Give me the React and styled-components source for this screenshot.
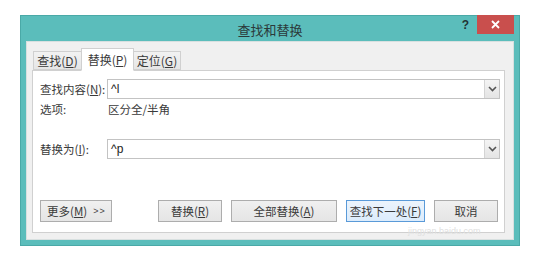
import React from "react";
import styled, { createGlobalStyle } from "styled-components";

const Global = createGlobalStyle`
  html, body { margin: 0; padding: 0; background: #ffffff; }
  body { font-family: "Noto Sans CJK SC", "Noto Sans", sans-serif; font-size: 12px; color: #3a3a3a; }
  * { box-sizing: border-box; }
`;

const Page = styled.div`
  width: 553px;
  height: 261px;
  padding: 15px 0 0 20px;
  position: relative;
`;

const Window = styled.div`
  width: 500px;
  height: 231px;
  background: #5bbdbb;
  border: 1px solid #4aa9a7;
  display: flex;
  flex-direction: column;
  padding: 0 5px 5px 5px;
`;

const TitleBar = styled.div`
  height: 26px;
  position: relative;
`;

const Title = styled.div`
  position: absolute;
  left: 0;
  right: 0;
  top: 5px;
  text-align: center;
  font-size: 13px;
  color: #2b3a3a;
  line-height: 17px;
`;

const Help = styled.div`
  position: absolute;
  right: 45px;
  top: 2px;
  font-family: "Liberation Sans", Arial, sans-serif;
  font-weight: bold;
  font-size: 12px;
  color: #233;
`;

const Close = styled.div`
  position: absolute;
  right: 0;
  top: -1px;
  width: 37px;
  height: 19px;
  background: #c94f4d;
  display: flex;
  align-items: center;
  justify-content: center;
`;

const Client = styled.div`
  flex: 1;
  background: #f0f0f0;
  border: 1px solid #d8e0e0;
  padding: 5px 8px 6px 5px;
  display: flex;
  flex-direction: column;
`;

const Tabs = styled.div`
  display: flex;
  align-items: flex-end;
  height: 23px;
  padding-left: 1px;
  position: relative;
  z-index: 1;
`;

const Tab = styled.div`
  height: ${(p) => (p.$active ? "23px" : "19px")};
  width: ${(p) => p.$w}px;
  background: ${(p) => (p.$active ? "#ffffff" : "linear-gradient(#f2f2f2, #e6e6e6)")};
  border: 1px solid #d0d0d0;
  border-bottom: ${(p) => (p.$active ? "1px solid #ffffff" : "1px solid #d0d0d0")};
  margin-left: ${(p) => (p.$first ? 0 : "-1px")};
  margin-bottom: ${(p) => (p.$active ? "-1px" : "0")};
  display: flex;
  align-items: center;
  justify-content: center;
  font-size: 12px;
  color: #3a3a3a;
  line-height: 1;
  padding-top: ${(p) => (p.$active ? "0" : "1px")};
`;

const U = styled.span`
  text-decoration: underline;
  text-underline-offset: 1px;
`;

const Panel = styled.div`
  flex: 1;
  background: #ffffff;
  border: 1px solid #d0d0d0;
  padding: 8px 4px 10px 7px;
  display: flex;
  flex-direction: column;
`;

const FieldRow = styled.div`
  display: grid;
  grid-template-columns: 67px 1fr;
  align-items: center;
  height: ${(p) => p.$h}px;
  margin-top: ${(p) => p.$mt || 0}px;
`;

const Label = styled.div`
  font-size: 11.5px;
  color: #3a3a3a;
  white-space: nowrap;
`;

const Value = styled.div`
  font-size: 11.5px;
  color: #3a3a3a;
  padding-left: 1px;
`;

const Combo = styled.div`
  height: 20px;
  border: 1px solid #c3c3c3;
  display: flex;
  align-items: center;
  background: #fff;
`;

const ComboText = styled.div`
  flex: 1;
  padding-left: 3px;
  font-family: "Liberation Sans", Arial, sans-serif;
  font-size: 12px;
  color: #222;
`;

const DropBtn = styled.div`
  width: 15px;
  height: 18px;
  background: linear-gradient(#f4f4f4, #e4e4e4);
  border-left: 1px solid #d4d4d4;
  display: flex;
  align-items: center;
  justify-content: center;
`;

const ButtonRow = styled.div`
  display: flex;
  gap: 9px;
  margin-top: 41px;
  height: 22px;
`;

const Button = styled.div`
  width: ${(p) => p.$w}px;
  margin-right: ${(p) => p.$mr || 0}px;
  height: 22px;
  border: 1px solid ${(p) => (p.$focus ? "#5a9ad8" : "#adadad")};
  background: ${(p) => (p.$focus ? "linear-gradient(#ecf4fc, #dcecfc)" : "linear-gradient(#f0f0f0, #e5e5e5)")};
  display: flex;
  align-items: center;
  justify-content: ${(p) => (p.$left ? "flex-start" : "center")};
  padding-left: ${(p) => (p.$left ? "6px" : "0")};
  font-size: 11.5px;
  color: #3a3a3a;
  white-space: nowrap;
`;

const Arrows = styled.span`
  font-family: "Liberation Sans", Arial, sans-serif;
  font-size: 9px;
  letter-spacing: 1px;
  margin-left: 6px;
  color: #444;
`;

const WmUrl = styled.div`
  position: absolute;
  left: 408px;
  top: 226px;
  font-family: "Liberation Sans", Arial, sans-serif;
  font-size: 9px;
  color: #e0e0e0;
  pointer-events: none;
`;

const Chevron = () => (
  <svg width="9" height="6" viewBox="0 0 9 6">
    <path d="M1 1 L4.5 4.5 L8 1" fill="none" stroke="#555" strokeWidth="1.6" />
  </svg>
);

export default function App() {
  return (
    <Page>
      <Global />
      <Window>
        <TitleBar>
          <Title>查找和替换</Title>
          <Help>?</Help>
          <Close>
            <svg width="9" height="9" viewBox="0 0 9 9">
              <path d="M1 1 L8 8 M8 1 L1 8" stroke="#fff" strokeWidth="1.8" />
            </svg>
          </Close>
        </TitleBar>
        <Client>
          <Tabs>
            <Tab $first $w={49}>查找(<U>D</U>)</Tab>
            <Tab $active $w={53}>替换(<U>P</U>)</Tab>
            <Tab $w={48}>定位(<U>G</U>)</Tab>
          </Tabs>
          <Panel>
            <FieldRow $h={20}>
              <Label>查找内容(<U>N</U>):</Label>
              <Combo>
                <ComboText>^l</ComboText>
                <DropBtn><Chevron /></DropBtn>
              </Combo>
            </FieldRow>
            <FieldRow $h={17} $mt={1}>
              <Label>选项:</Label>
              <Value>区分全/半角</Value>
            </FieldRow>
            <FieldRow $h={20} $mt={22}>
              <Label>替换为(<U>I</U>):</Label>
              <Combo>
                <ComboText>^p</ComboText>
                <DropBtn><Chevron /></DropBtn>
              </Combo>
            </FieldRow>
            <ButtonRow>
              <Button $w={72} $mr={37} $left>更多(<U>M</U>)<Arrows>&gt;&gt;</Arrows></Button>
              <Button $w={64}>替换(<U>R</U>)</Button>
              <Button $w={106}>全部替换(<U>A</U>)</Button>
              <Button $w={79} $focus>查找下一处(<U>F</U>)</Button>
              <Button $w={64}>取消</Button>
            </ButtonRow>
          </Panel>
        </Client>
      </Window>
      <WmUrl>jingyan.baidu.com</WmUrl>
    </Page>
  );
}
